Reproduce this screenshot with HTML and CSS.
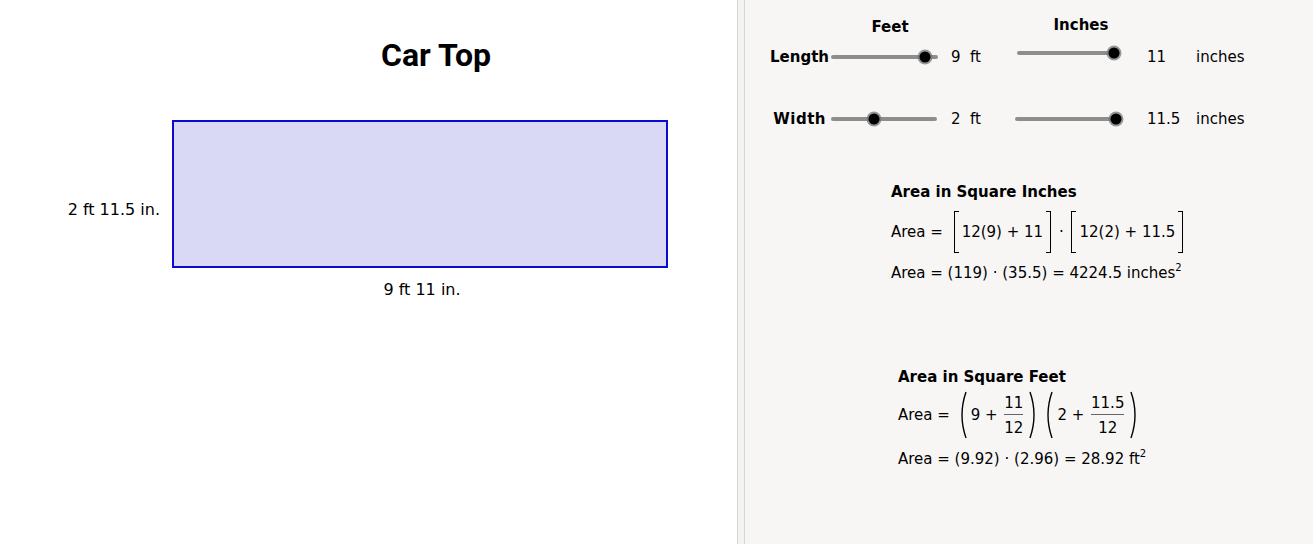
FILE: index.html
```html
<html>
<head>
  <link rel="stylesheet" href="styles.css">
</head>
<body>
<div class="applet">
  <div class="graphics">
    <h1 class="title">Car Top</h1>
    <div class="drawing">
      <div class="side-label">2 ft 11.5 in.</div>
      <div class="shape-col">
        <div class="car-top"></div>
        <div class="bottom-label">9 ft 11 in.</div>
      </div>
    </div>
  </div>

  <div class="divider"></div>

  <div class="panel">
    <div class="controls">
      <div></div>
      <div class="head">Feet</div>
      <div></div>
      <div class="head head-inches">Inches</div>
      <div></div>
      <div></div>

      <div class="name">Length</div>
      <div class="slider">
        <svg width="110" height="20" viewBox="0 0 110 20">
          <line x1="3" y1="10" x2="106" y2="10" class="track"/>
          <circle cx="95" cy="10" r="7.5" class="halo"/>
          <circle cx="95" cy="10" r="5.5" class="knob"/>
        </svg>
      </div>
      <div class="value">9 &nbsp;ft</div>
      <div class="slider slider-up">
        <svg width="112" height="20" viewBox="0 0 112 20">
          <line x1="7" y1="10" x2="106" y2="10" class="track"/>
          <circle cx="102" cy="10" r="7.5" class="halo"/>
          <circle cx="102" cy="10" r="5.5" class="knob"/>
        </svg>
      </div>
      <div class="number">11</div>
      <div class="unit">inches</div>

      <div class="name name-width">Width</div>
      <div class="slider">
        <svg width="110" height="20" viewBox="0 0 110 20">
          <line x1="3" y1="10" x2="105" y2="10" class="track"/>
          <circle cx="44" cy="10" r="7.5" class="halo"/>
          <circle cx="44" cy="10" r="5.5" class="knob"/>
        </svg>
      </div>
      <div class="value">2 &nbsp;ft</div>
      <div class="slider">
        <svg width="112" height="20" viewBox="0 0 112 20">
          <line x1="5" y1="10" x2="108" y2="10" class="track"/>
          <circle cx="104" cy="10" r="7.5" class="halo"/>
          <circle cx="104" cy="10" r="5.5" class="knob"/>
        </svg>
      </div>
      <div class="number">11.5</div>
      <div class="unit">inches</div>
    </div>

    <div class="calc calc-inches">
      <div class="calc-title">Area in Square Inches</div>
      <div class="formula">
        Area =&nbsp;<span class="brk brk-l first"></span>12(9) + 11<span class="brk brk-r"></span>&nbsp;·&nbsp;<span class="brk brk-l"></span>12(2) + 11.5<span class="brk brk-r"></span>
      </div>
      <div class="formula-line">Area = (119) · (35.5) = 4224.5 inches<sup>2</sup></div>
    </div>

    <div class="calc calc-feet">
      <div class="calc-title">Area in Square Feet</div>
      <div class="formula formula-frac">
        Area =&nbsp;
        <svg class="paren" width="10" height="50" viewBox="0 0 10 50"><path d="M8 2 Q0 25 8 48"/></svg>
        9 +&nbsp;<span class="frac"><span>11</span><span class="den">12</span></span>
        <svg class="paren" width="10" height="50" viewBox="0 0 10 50"><path d="M2 2 Q10 25 2 48"/></svg>
        <svg class="paren" width="10" height="50" viewBox="0 0 10 50"><path d="M8 2 Q0 25 8 48"/></svg>
        2 +&nbsp;<span class="frac"><span>11.5</span><span class="den">12</span></span>
        <svg class="paren" width="10" height="50" viewBox="0 0 10 50"><path d="M2 2 Q10 25 2 48"/></svg>
      </div>
      <div class="formula-line formula-last">Area = (9.92) · (2.96) = 28.92 ft<sup>2</sup></div>
    </div>
  </div>
</div>
</body>
</html>
```

FILE: styles.css
```css
body {
  margin: 0;
  padding: 0;
  font-family: "DejaVu Sans", sans-serif;
  font-size: 15px;
  color: #000;
}
.applet {
  display: flex;
  height: 544px;
  overflow: hidden;
}
.graphics {
  width: 737px;
  background-color: #fff;
  font-size: 16px;
}
.title {
  margin: 0;
  padding: 37px 0 0 381px;
  font-family: Roboto, sans-serif;
  font-weight: 700;
  font-size: 32px;
  line-height: 36px;
}
.drawing {
  display: flex;
  margin-top: 47px;
}
.side-label {
  width: 160px;
  text-align: right;
  margin-top: 81px;
  line-height: 18px;
  white-space: nowrap;
}
.shape-col {
  margin-left: 12px;
  display: flex;
  flex-direction: column;
  align-items: center;
}
.car-top {
  width: 496px;
  height: 148px;
  box-sizing: border-box;
  border: 2px solid #0a0acc;
  background-color: #d9d9f5;
}
.bottom-label {
  margin-top: 13px;
  line-height: 18px;
  padding-left: 4px;
}
.divider {
  width: 6px;
  background-color: #f4f3f3;
  border-left: 1px solid #d6d6d6;
  border-right: 1px solid #d6d6d6;
}
.panel {
  flex: 1;
  background-color: #f7f6f5;
}
.controls {
  display: grid;
  grid-template-columns: 85px 110px 72px 112px 66px auto;
  grid-template-rows: 22px 38px 86px;
  align-items: center;
  padding-top: 16px;
}
.head {
  font-weight: 700;
  text-align: center;
  padding-left: 10px;
}
.head-inches {
  padding-left: 26px;
  margin-top: -4px;
}
.name {
  font-weight: 700;
  text-align: right;
  padding-right: 1px;
}
.name-width {
  padding-right: 4px;
  letter-spacing: 0.5px;
}
.slider svg {
  display: block;
}
.slider-up {
  margin-top: -8px;
}
.track {
  stroke: #8d8d8d;
  stroke-width: 4;
  stroke-linecap: round;
}
.halo {
  fill: #777;
  opacity: 0.75;
}
.knob {
  fill: #000;
}
.value {
  padding-left: 11px;
}
.number {
  padding-left: 23px;
}
.unit {
  padding-left: 6px;
}
.calc {
  display: flex;
  flex-direction: column;
  align-items: flex-start;
  line-height: 20px;
}
.calc-inches {
  margin: 20px 0 0 146px;
}
.calc-feet {
  margin: 84px 0 0 153px;
}
.calc-title {
  font-weight: 700;
}
.formula {
  display: flex;
  align-items: center;
  margin-top: 7px;
  white-space: nowrap;
}
.formula-frac {
  margin-top: 3px;
}
.formula-line {
  margin-top: 8px;
  white-space: nowrap;
}
.formula-last {
  margin-top: 9px;
}
sup {
  font-size: 10px;
  vertical-align: 7px;
  line-height: 0;
}
.brk {
  display: inline-block;
  width: 4px;
  height: 40px;
  border: 1.5px solid #000;
  margin: 2px 3px;
}
.brk-l {
  border-right: none;
}
.brk-l.first {
  margin-left: 6px;
}
.brk-r {
  border-left: none;
}
.paren {
  display: block;
  margin: 0 3px;
}
.paren path {
  fill: none;
  stroke: #000;
  stroke-width: 1.4;
}
.frac {
  display: inline-flex;
  flex-direction: column;
  align-items: center;
  line-height: 22px;
  padding: 0 2px;
}
.den {
  border-top: 1px solid #666;
  width: 100%;
  text-align: center;
  padding-top: 2px;
}
```
